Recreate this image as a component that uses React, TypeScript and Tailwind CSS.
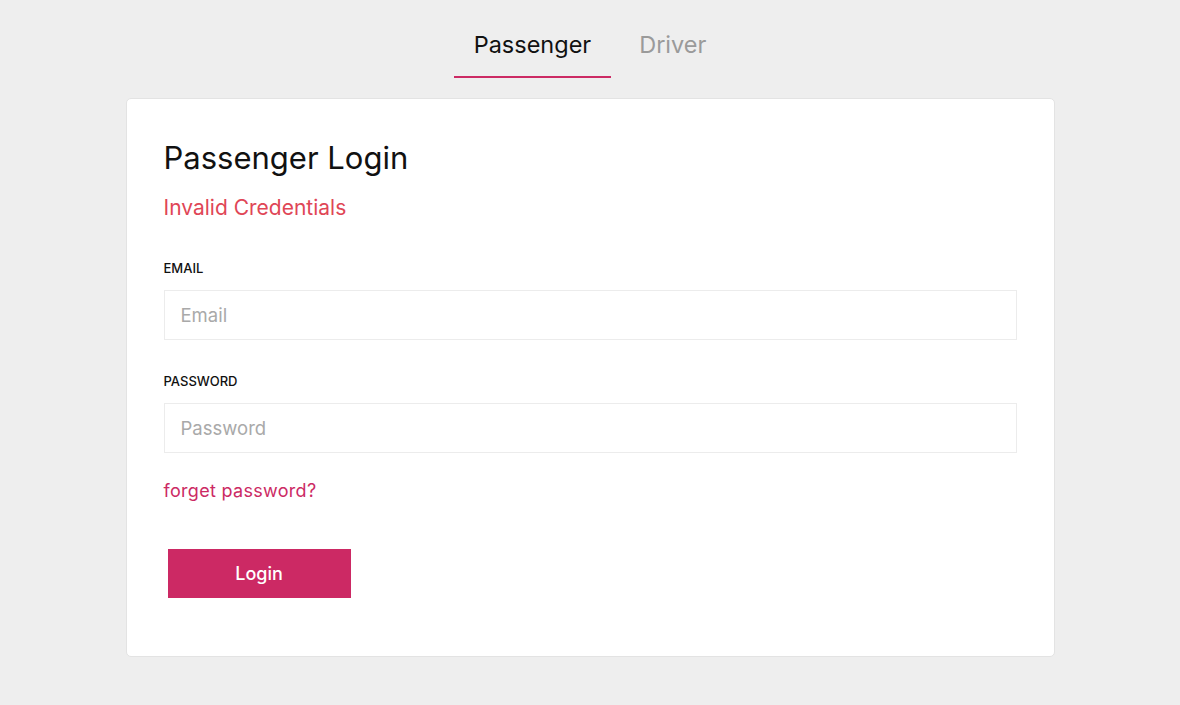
import { useState } from "react"

const font = { fontFamily: "Inter, 'Open Sans', sans-serif" }

export default function App() {
  const [tab, setTab] = useState("passenger")

  return (
    <div className="min-h-[705px] bg-[#eeeeee] flex flex-col items-center" style={font}>
      {/* Tabs */}
      <div className="flex h-[78px] items-end gap-[8px]">
        <button
          onClick={() => setTab("passenger")}
          className={`px-5 pb-[16px] text-[23.5px] leading-[30px] border-b-2 ${
            tab === "passenger" ? "border-[#cc2a64] text-[#111111]" : "border-transparent text-[#9a9a9a]"
          }`}
        >
          Passenger
        </button>
        <button
          onClick={() => setTab("driver")}
          className={`px-5 pb-[16px] text-[23.5px] leading-[30px] border-b-2 ${
            tab === "driver" ? "border-[#cc2a64] text-[#111111]" : "border-transparent text-[#9a9a9a]"
          }`}
        >
          Driver
        </button>
      </div>

      {/* Card */}
      <div className="mt-[20px] w-[929px] bg-white border border-[#e3e3e3] rounded-[5px] px-[37px] pt-[39px] pb-[58px]">
        <h1 className="text-[31px] leading-[40px] text-[#111111]">Passenger Login</h1>
        <p className="mt-[16px] text-[21px] leading-[28px] text-[#e04656]">Invalid Credentials</p>

        <label className="block mt-[36px] text-[13px] leading-[20px] font-medium text-[#111111]">EMAIL</label>
        <input
          type="email"
          placeholder="Email"
          className="mt-[12px] block w-full h-[50px] border border-[#ececec] px-4 text-[18.5px] text-[#333] placeholder:text-[#a9a9a9] outline-none"
        />

        <label className="block mt-[31px] text-[13px] leading-[20px] font-medium text-[#111111]">PASSWORD</label>
        <input
          type="password"
          placeholder="Password"
          className="mt-[12px] block w-full h-[50px] border border-[#ececec] px-4 text-[18.5px] text-[#333] placeholder:text-[#a9a9a9] outline-none"
        />

        <a href="#" className="block mt-[26px] text-[18px] leading-[24px] tracking-[0.3px] text-[#cc2a64]">
          forget password?
        </a>

        <button className="mt-[46px] ml-[4px] w-[183px] h-[49px] bg-[#cc2964] text-white text-[18px] font-medium">
          Login
        </button>
      </div>
    </div>
  )
}
